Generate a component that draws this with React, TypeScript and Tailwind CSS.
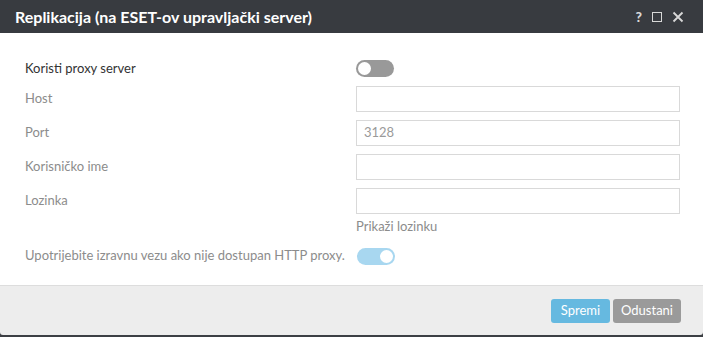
import React from "react";

function Toggle({ on }: { on: boolean }) {
  return on ? (
    <div className="w-[38px] h-[17px] rounded-full bg-[#a8d7f0] flex items-center justify-end pr-[2px]">
      <div className="w-[13px] h-[13px] rounded-full bg-white" />
    </div>
  ) : (
    <div className="w-[38px] h-[17px] rounded-full bg-[#999999] flex items-center pl-[2px]">
      <div className="w-[13px] h-[13px] rounded-full bg-white" />
    </div>
  );
}

function Field({ label, value }: { label: string; value?: string }) {
  return (
    <div className="flex items-center h-[26px]">
      <div className="w-[331px] text-[#8c8c8c] whitespace-nowrap">{label}</div>
      <div className="w-[324px] h-[26px] border border-[#d9d9d9] bg-white px-[7px] flex items-center text-[#9a9a9a]">
        {value}
      </div>
    </div>
  );
}

export default function App() {
  return (
    <div
      className="w-[703px] h-[337px] bg-[#3c3f44] flex flex-col text-[13px]"
      style={{ fontFamily: 'Lato, "Noto Sans", sans-serif' }}
    >
      <div className="h-[33px] bg-[#383b40] flex items-center px-[15px] text-white">
        <div className="font-bold text-[16px] flex-1 whitespace-nowrap">Replikacija (na ESET-ov upravljački server)</div>
        <div className="flex items-center gap-[10px] pr-[4px]">
          <span className="font-black text-[14px] text-[#d8d8d8]">?</span>
          <span className="w-[10px] h-[10px] border-[1.5px] border-[#d8d8d8]" />
          <svg width="12" height="12" viewBox="0 0 12 12">
            <path d="M1.5 1.5 L10.5 10.5 M10.5 1.5 L1.5 10.5" stroke="#d8d8d8" strokeWidth="1.8" />
          </svg>
        </div>
      </div>
      <div className="bg-white flex-1 pl-[25px] pt-[27px]">
        <div className="flex items-center h-[17px] mb-[9px]">
          <div className="w-[331px] text-[#333333] whitespace-nowrap">Koristi proxy server</div>
          <Toggle on={false} />
        </div>
        <div className="flex flex-col gap-[8px]">
          <Field label="Host" />
          <Field label="Port" value="3128" />
          <Field label="Korisničko ime" />
          <Field label="Lozinka" />
        </div>
        <div className="pl-[331px] mt-[3px] text-[#8c8c8c]">Prikaži lozinku</div>
        <div className="flex items-center mt-[11px] h-[17px]">
          <div className="w-[332px] text-[#8c8c8c] whitespace-nowrap">Upotrijebite izravnu vezu ako nije dostupan HTTP proxy.</div>
          <Toggle on={true} />
        </div>
      </div>
      <div className="h-[50px] bg-[#ededed] border-t border-[#dddddd] flex items-center justify-end pr-[22px] gap-[3px] rounded-b-[3px] mb-[2px]">
        <button className="h-[24px] w-[59px] bg-[#66b9e0] text-white rounded-[3px] mt-[1px]">Spremi</button>
        <button className="h-[24px] w-[68px] bg-[#9a9a9a] text-white rounded-[3px] mt-[1px]">Odustani</button>
      </div>
    </div>
  );
}
